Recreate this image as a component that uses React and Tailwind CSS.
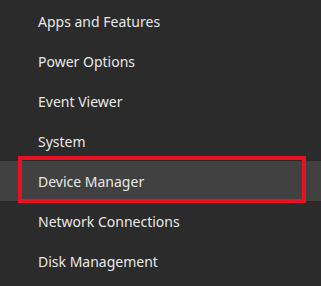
import React from 'react';

const items = [
  'Apps and Features',
  'Power Options',
  'Event Viewer',
  'System',
  'Device Manager',
  'Network Connections',
  'Disk Management',
];

export default function App() {
  return (
    <div className="w-[321px] h-[286px] bg-[#2b2b2b] pt-px overflow-hidden font-['Noto_Sans',sans-serif] text-[14px] text-[#e8e8e8]">
      {items.map((label) => {
        const active = label === 'Device Manager';
        return (
          <div
            key={label}
            className={
              active
                ? 'relative h-10 flex items-center pl-[38px] bg-[#414141]'
                : 'relative h-10 flex items-center pl-[38px]'
            }
          >
            {label}
            {active && (
              <div className="absolute left-[18px] top-[-5px] w-[288px] h-[47px] border-4 border-[#e81123]" />
            )}
          </div>
        );
      })}
    </div>
  );
}
